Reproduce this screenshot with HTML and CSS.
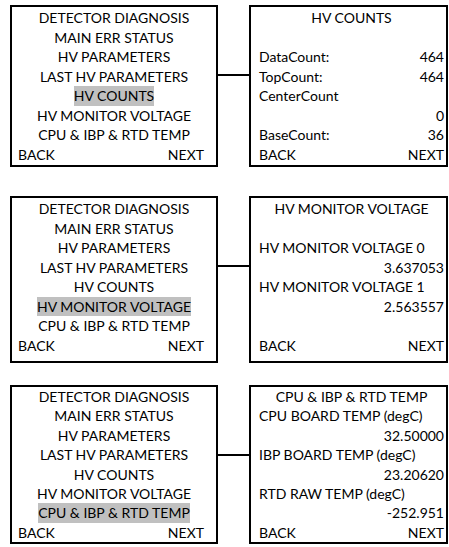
FILE: index.html
```html
<!DOCTYPE html>
<html>
<head>
<meta charset="utf-8">
<link rel="stylesheet" href="styles.css">
</head>
<body>
<div class="page">
  <div class="row row-1">
    <div class="box menu">
      <div class="item">DETECTOR DIAGNOSIS</div>
      <div class="item">MAIN ERR STATUS</div>
      <div class="item">HV PARAMETERS</div>
      <div class="item">LAST HV PARAMETERS</div>
      <div class="item"><span class="sel">HV COUNTS</span></div>
      <div class="item">HV MONITOR VOLTAGE</div>
      <div class="item">CPU &amp; IBP &amp; RTD TEMP</div>
      <div class="nav"><span>BACK</span><span>NEXT</span></div>
    </div>
    <div class="link"></div>
    <div class="box detail">
      <div class="title">HV COUNTS</div>
      <div class="blank"></div>
      <div class="pair"><span>DataCount:</span><span>464</span></div>
      <div class="pair"><span>TopCount:</span><span>464</span></div>
      <div class="label">CenterCount</div>
      <div class="value">0</div>
      <div class="pair"><span>BaseCount:</span><span>36</span></div>
      <div class="nav"><span>BACK</span><span>NEXT</span></div>
    </div>
  </div>

  <div class="row row-2">
    <div class="box menu">
      <div class="item">DETECTOR DIAGNOSIS</div>
      <div class="item">MAIN ERR STATUS</div>
      <div class="item">HV PARAMETERS</div>
      <div class="item">LAST HV PARAMETERS</div>
      <div class="item">HV COUNTS</div>
      <div class="item"><span class="sel">HV MONITOR VOLTAGE</span></div>
      <div class="item">CPU &amp; IBP &amp; RTD TEMP</div>
      <div class="nav"><span>BACK</span><span>NEXT</span></div>
    </div>
    <div class="link"></div>
    <div class="box detail">
      <div class="title">HV MONITOR VOLTAGE</div>
      <div class="blank"></div>
      <div class="label">HV MONITOR VOLTAGE 0</div>
      <div class="value">3.637053</div>
      <div class="label">HV MONITOR VOLTAGE 1</div>
      <div class="value">2.563557</div>
      <div class="blank"></div>
      <div class="nav"><span>BACK</span><span>NEXT</span></div>
    </div>
  </div>

  <div class="row row-3">
    <div class="box menu">
      <div class="item">DETECTOR DIAGNOSIS</div>
      <div class="item">MAIN ERR STATUS</div>
      <div class="item">HV PARAMETERS</div>
      <div class="item">LAST HV PARAMETERS</div>
      <div class="item">HV COUNTS</div>
      <div class="item">HV MONITOR VOLTAGE</div>
      <div class="item"><span class="sel">CPU &amp; IBP &amp; RTD TEMP</span></div>
      <div class="nav"><span>BACK</span><span>NEXT</span></div>
    </div>
    <div class="link"></div>
    <div class="box detail">
      <div class="title">CPU &amp; IBP &amp; RTD TEMP</div>
      <div class="label">CPU BOARD TEMP (degC)</div>
      <div class="value">32.50000</div>
      <div class="label">IBP BOARD TEMP (degC)</div>
      <div class="value">23.20620</div>
      <div class="label">RTD RAW TEMP (degC)</div>
      <div class="value">-252.951</div>
      <div class="nav"><span>BACK</span><span>NEXT</span></div>
    </div>
  </div>
</div>
</body>
</html>
```

FILE: styles.css
```css
html, body {
  margin: 0;
  padding: 0;
  background: #ffffff;
}

body {
  font-family: Lato, "Liberation Sans", sans-serif;
  font-size: 14px;
  color: #000000;
}

.page {
  display: flex;
  flex-direction: column;
  padding: 5px 0 0 10px;
}

.row {
  display: flex;
  align-items: flex-start;
}

.row-2 {
  margin-top: 29px;
}

.row-3 {
  margin-top: 22px;
}

.box {
  border: 2px solid #000000;
  padding-top: 1px;
  padding-bottom: 1px;
  box-sizing: border-box;
  height: 162px;
  line-height: 19.5px;
}

.row-2 .box {
  height: 167px;
}

.row-3 .box {
  height: 159px;
  padding-top: 0;
  padding-bottom: 0;
  line-height: 19.4px;
}

.menu {
  width: 208px;
  padding-left: 6px;
  padding-right: 12px;
}

.item {
  text-align: center;
  height: 1lh;
  padding-left: 6px;
}

.sel {
  display: inline-block;
  background: #c0c0c0;
}

.link {
  width: 31px;
  height: 2px;
  background: #000000;
  margin-top: 69px;
}

.detail {
  width: 199px;
  padding-left: 8px;
  padding-right: 2px;
}

.title,
.blank,
.label,
.value,
.pair,
.nav {
  height: 1lh;
}

.title {
  text-align: center;
}

.pair,
.nav {
  display: flex;
  justify-content: space-between;
}

.value {
  text-align: right;
}
```
